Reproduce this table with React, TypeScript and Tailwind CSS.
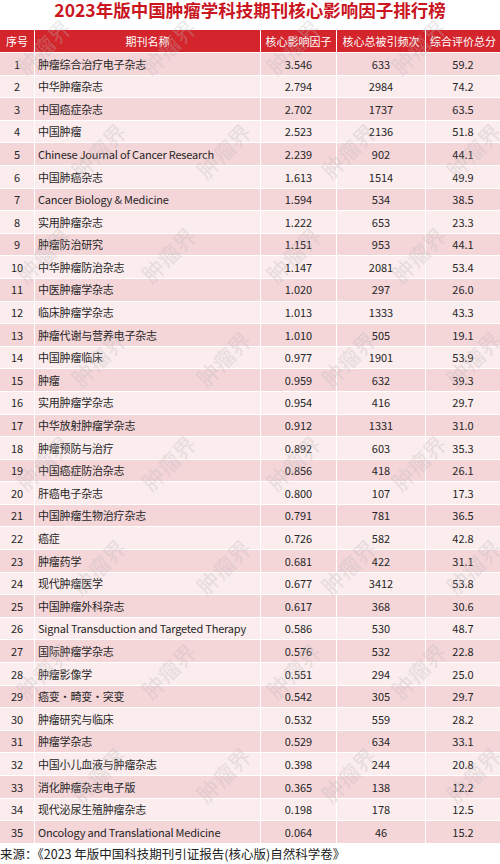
import React from "react";

type Row = [number, string, string, string, string];

const rows: Row[] = [
  [1, "肿瘤综合治疗电子杂志", "3.546", "633", "59.2"],
  [2, "中华肿瘤杂志", "2.794", "2984", "74.2"],
  [3, "中国癌症杂志", "2.702", "1737", "63.5"],
  [4, "中国肿瘤", "2.523", "2136", "51.8"],
  [5, "Chinese Journal of Cancer Research", "2.239", "902", "44.1"],
  [6, "中国肺癌杂志", "1.613", "1514", "49.9"],
  [7, "Cancer Biology & Medicine", "1.594", "534", "38.5"],
  [8, "实用肿瘤杂志", "1.222", "653", "23.3"],
  [9, "肿瘤防治研究", "1.151", "953", "44.1"],
  [10, "中华肿瘤防治杂志", "1.147", "2081", "53.4"],
  [11, "中医肿瘤学杂志", "1.020", "297", "26.0"],
  [12, "临床肿瘤学杂志", "1.013", "1333", "43.3"],
  [13, "肿瘤代谢与营养电子杂志", "1.010", "505", "19.1"],
  [14, "中国肿瘤临床", "0.977", "1901", "53.9"],
  [15, "肿瘤", "0.959", "632", "39.3"],
  [16, "实用肿瘤学杂志", "0.954", "416", "29.7"],
  [17, "中华放射肿瘤学杂志", "0.912", "1331", "31.0"],
  [18, "肿瘤预防与治疗", "0.892", "603", "35.3"],
  [19, "中国癌症防治杂志", "0.856", "418", "26.1"],
  [20, "肝癌电子杂志", "0.800", "107", "17.3"],
  [21, "中国肿瘤生物治疗杂志", "0.791", "781", "36.5"],
  [22, "癌症", "0.726", "582", "42.8"],
  [23, "肿瘤药学", "0.681", "422", "31.1"],
  [24, "现代肿瘤医学", "0.677", "3412", "53.8"],
  [25, "中国肿瘤外科杂志", "0.617", "368", "30.6"],
  [26, "Signal Transduction and Targeted Therapy", "0.586", "530", "48.7"],
  [27, "国际肿瘤学杂志", "0.576", "532", "22.8"],
  [28, "肿瘤影像学", "0.551", "294", "25.0"],
  [29, "癌变・畸变・突变", "0.542", "305", "29.7"],
  [30, "肿瘤研究与临床", "0.532", "559", "28.2"],
  [31, "肿瘤学杂志", "0.529", "634", "33.1"],
  [32, "中国小儿血液与肿瘤杂志", "0.398", "244", "20.8"],
  [33, "消化肿瘤杂志电子版", "0.365", "138", "12.2"],
  [34, "现代泌尿生殖肿瘤杂志", "0.198", "178", "12.5"],
  [35, "Oncology and Translational Medicine", "0.064", "46", "15.2"],
];

const cols = "grid grid-cols-[34px_225px_75px_88px_74px] gap-x-px";

// faint diagonal watermark spots, kept inside the page
const marks: [number, number][] = [];
for (let r = 0; r < 8; r++) {
  for (let c = 0; c < 4; c++) {
    marks.push([c * 125 + 10 + (r % 2) * 55, r * 104 + 30]);
  }
}

export default function App() {
  return (
    <div className="relative w-[500px] h-[864px] overflow-hidden bg-white font-['Noto_Sans_CJK_SC','Noto_Sans',sans-serif]">
      <div className="h-[30px] flex justify-center">
        <h1 className="text-[17.5px] leading-[20px] font-bold text-[#c9161f] whitespace-nowrap">
          2023年版中国肿瘤学科技期刊核心影响因子排行榜
        </h1>
      </div>

      <div className="flex flex-col gap-y-px">
        <div className={`${cols} h-[22px] text-[11px] text-white`}>
          {["序号", "期刊名称", "核心影响因子", "核心总被引频次", "综合评价总分"].map((h) => (
            <div key={h} className="flex items-center justify-center bg-[#d4252c]">
              {h}
            </div>
          ))}
        </div>

        {rows.map(([n, name, f, c, s]) => (
          <div
            key={n}
            className={`${cols} h-[21.6px] text-[11px] text-[#262626] ${
              n % 2 === 1 ? "*:bg-[#f4d5d8]" : "*:bg-[#fbeced]"
            }`}
          >
            <div className="flex items-center justify-center">{n}</div>
            <div className="flex items-center pl-[3px] whitespace-nowrap tracking-[-0.2px]">{name}</div>
            <div className="flex items-center justify-center">{f}</div>
            <div className="flex items-center justify-center">{c}</div>
            <div className="flex items-center justify-center">{s}</div>
          </div>
        ))}
      </div>

      <p className="mt-[1px] text-[12.5px] leading-[20px] text-[#222] whitespace-nowrap">
        来源：《2023 年版中国科技期刊引证报告(核心版)自然科学卷》
      </p>

      <div className="pointer-events-none absolute inset-0">
        {marks.map(([x, y], i) => (
          <span
            key={i}
            className="absolute -rotate-45 text-[22px] text-[#b9b9b9] opacity-30 whitespace-nowrap"
            style={{ left: x, top: y }}
          >
            肿瘤界
          </span>
        ))}
      </div>
    </div>
  );
}
